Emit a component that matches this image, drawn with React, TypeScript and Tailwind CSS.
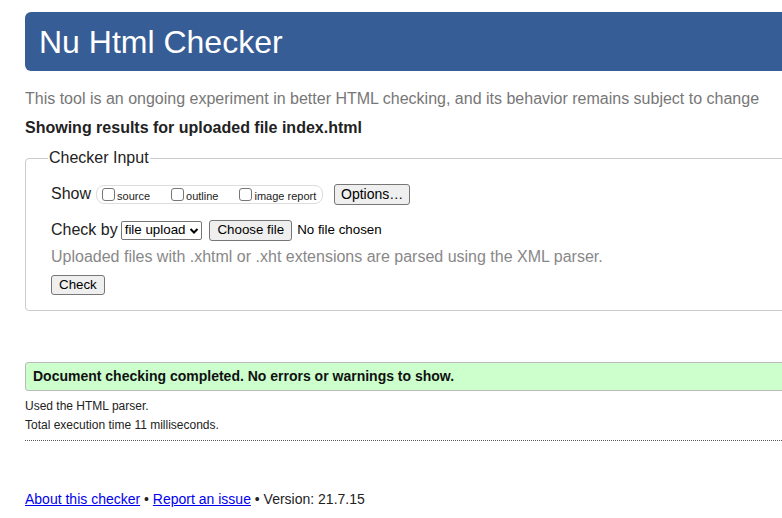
const font = { fontFamily: '"Liberation Sans", Arial, sans-serif' };

function Checkbox({ label }: { label: string }) {
  return (
    <label className="flex items-center gap-[2px]">
      <span className="inline-block h-[13px] w-[13px] rounded-[3px] border border-[#767676] bg-white" />
      <span className="text-[11px] leading-none text-[#222] translate-y-[2px]">{label}</span>
    </label>
  );
}

function NativeButton({ children, className = "" }: { children: React.ReactNode; className?: string }) {
  return (
    <span
      className={`inline-flex items-center rounded-[3px] border border-[#767676] bg-[#efefef] text-[13.33px] leading-none text-black ${className}`}
    >
      {children}
    </span>
  );
}

export default function App() {
  return (
    <div className="w-[782px] h-[518px] overflow-hidden bg-white text-[#222]" style={font}>
      <div className="w-[900px] pl-[25px]">
        {/* Header */}
        <div className="mt-[12px] flex h-[59px] items-center rounded-md bg-[#365d95] pl-[14px]">
          <h1 className="text-[32px] leading-none text-white">Nu Html Checker</h1>
        </div>

        <p className="mt-[19px] text-[16px] leading-[18px] text-[#777]">
          This tool is an ongoing experiment in better HTML checking, and its behavior remains subject to change
        </p>
        <p className="mt-[11px] text-[16px] font-bold leading-[18px] text-[#222]">
          Showing results for uploaded file index.html
        </p>

        {/* Checker input */}
        <fieldset className="mt-[11px] rounded-[4px] border border-[#ccc] px-[25px] pb-[15px] pt-[17px]">
          <legend className="px-[1px] ml-[-3px] text-[16px] leading-[20px] text-[#222]">Checker Input</legend>

          <div className="-mt-[1px] flex h-[20px] items-center">
            <span className="text-[16px] text-[#222]">Show</span>
            <div className="ml-[5px] flex h-[19px] items-center gap-[21px] rounded-[8px] border border-[#ddd] pl-[5px] pr-[4px] w-[227px]">
              <Checkbox label="source" />
              <Checkbox label="outline" />
              <Checkbox label="image report" />
            </div>
            <NativeButton className="ml-[11px] h-[21px] px-[6px] text-[14px]">Options…</NativeButton>
          </div>

          <div className="mt-[16px] flex h-[20px] items-center">
            <span className="text-[16px] text-[#222]">Check by</span>
            <span className="ml-[3px] inline-flex h-[19px] items-center gap-[4px] rounded-[2px] border border-[#767676] bg-white pl-[3px] pr-[2px] text-[13.33px] text-black">
              file upload
              <svg width="10" height="8" viewBox="0 0 10 8" className="mt-[1px]">
                <path d="M1.5 2 L5 5.5 L8.5 2" stroke="black" strokeWidth="2" fill="none" />
              </svg>
            </span>
            <NativeButton className="ml-[7px] h-[21px] px-[7px]">Choose file</NativeButton>
            <span className="ml-[5px] text-[13.33px] text-black">No file chosen</span>
          </div>

          <p className="mt-[8px] text-[16px] leading-[18px] text-[#888]">
            Uploaded files with .xhtml or .xht extensions are parsed using the XML parser.
          </p>

          <div className="mt-[9px] flex">
            <NativeButton className="h-[20px] px-[7px]">Check</NativeButton>
          </div>
        </fieldset>

        {/* Result */}
        <div className="mt-[51px] flex h-[29px] items-center rounded-[3px] border border-[#bbb] bg-[#ccffcc] pl-[7px]">
          <span className="text-[14px] font-bold text-[#111]">Document checking completed. No errors or warnings to show.</span>
        </div>
        <p className="mt-[8px] text-[12px] leading-[14px] text-[#222]">Used the HTML parser.</p>
        <p className="mt-[5px] text-[12px] leading-[14px] text-[#222]">Total execution time 11 milliseconds.</p>
        <div className="mt-[8px] border-t border-dotted border-[#555]" />

        {/* Footer */}
        <p className="mt-[48px] text-[14px] text-[#222]">
          <a href="#" className="text-[#0000ee] underline">About this checker</a>
          {" • "}
          <a href="#" className="text-[#0000ee] underline">Report an issue</a>
          {" • Version: 21.7.15"}
        </p>
      </div>
    </div>
  );
}
